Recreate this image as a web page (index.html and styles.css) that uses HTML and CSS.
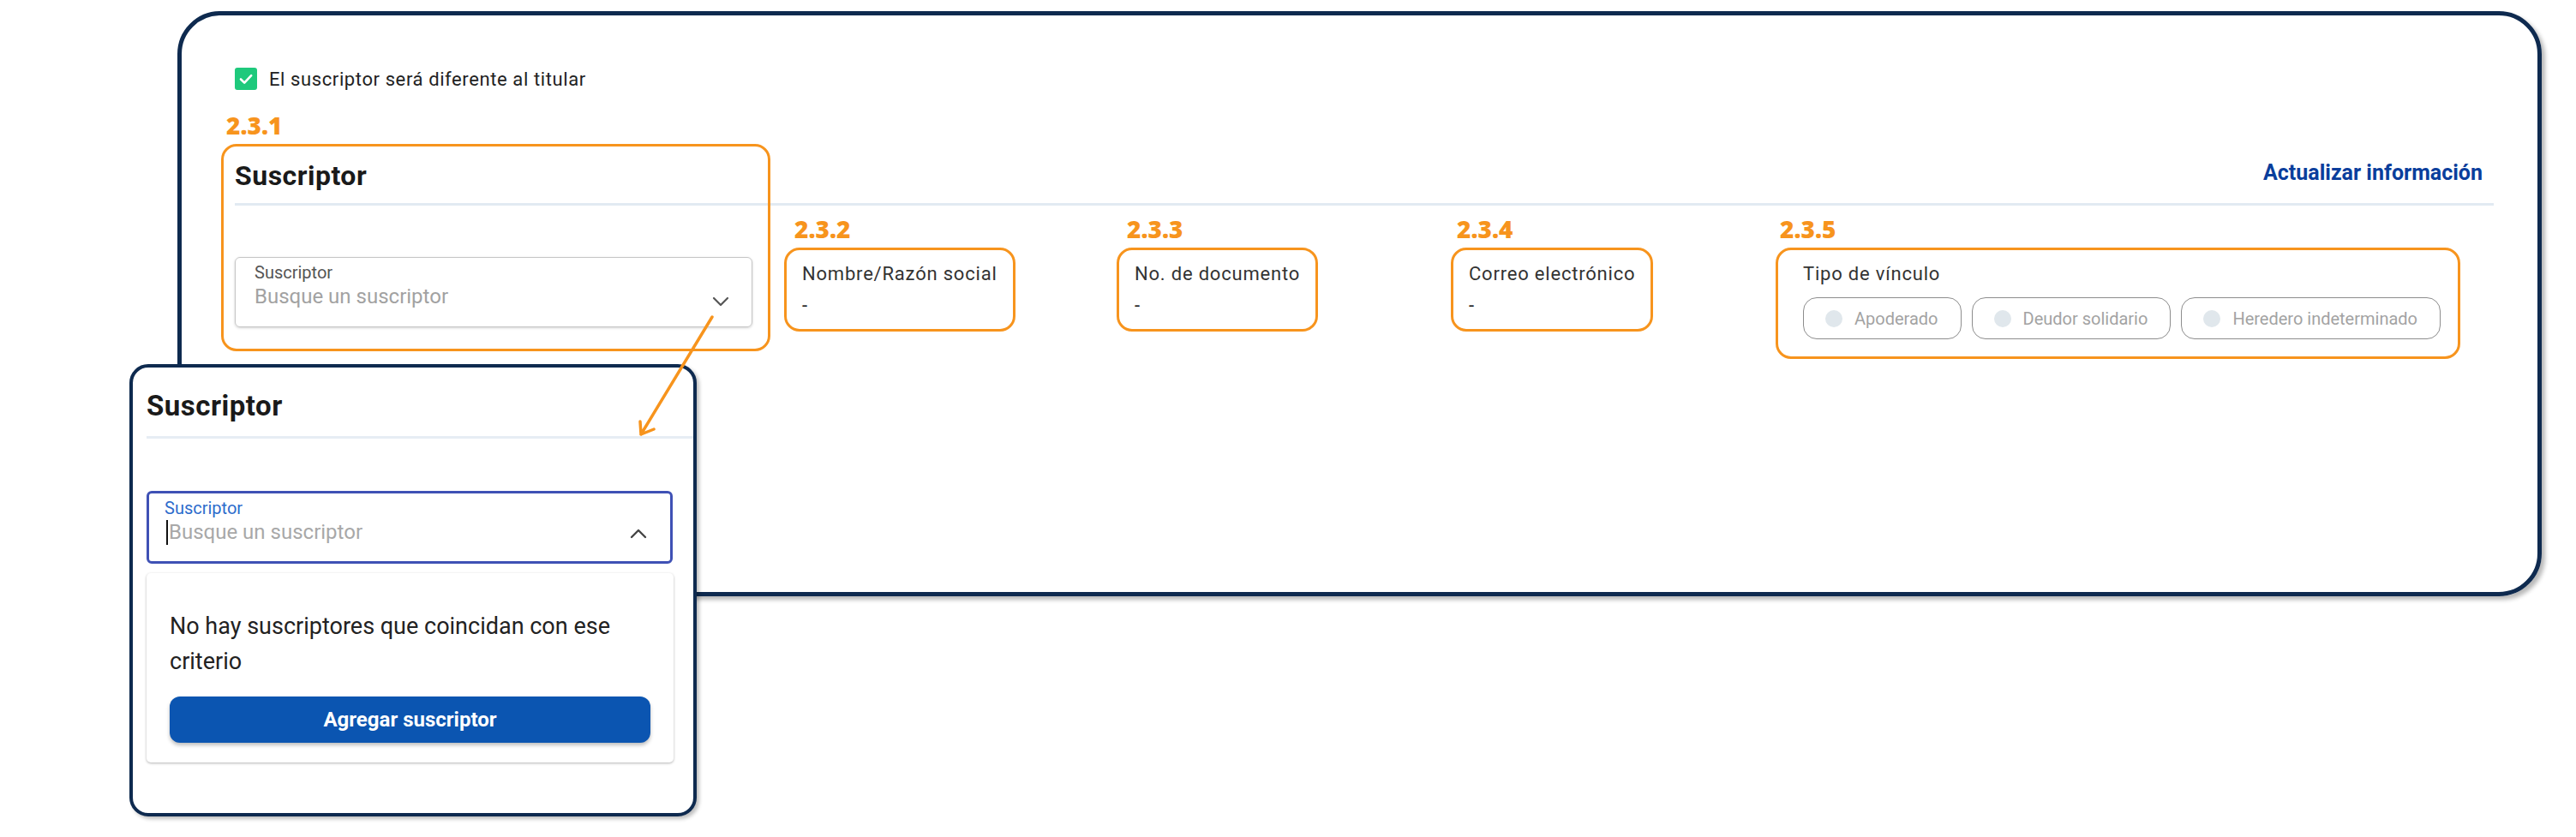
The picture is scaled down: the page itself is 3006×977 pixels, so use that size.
FILE: index.html
```html
<!DOCTYPE html>
<html lang="es">
  <head>
    <meta charset="UTF-8" />
    <meta name="viewport" content="width=device-width, initial-scale=1.0" />
    <title>Suscriptor</title>
    <link rel="stylesheet" href="styles.css">
  </head>
  <body>
    <div class="board">
      <section class="frame">
        <label class="check-row">
          <span class="checkbox">
            <svg viewBox="0 0 26 26" width="26" height="26">
              <path d="M7 13.5 L11.2 17.6 L19.2 9.2" fill="none" stroke="#fff" stroke-width="2.6" stroke-linecap="round" stroke-linejoin="round" />
            </svg>
          </span>
          El suscriptor será diferente al titular
        </label>

        <div class="section-head">
          <h2>Suscriptor</h2>
          <a class="update-link" href="#">Actualizar información</a>
        </div>

        <div class="fields">
          <div class="field-col select-col">
            <div class="select">
              <div class="select-text">
                <span class="select-label">Suscriptor</span>
                <span class="select-placeholder">Busque un suscriptor</span>
              </div>
              <svg class="chevron" viewBox="0 0 20 12" width="20" height="12">
                <path d="M2 2 L10 10 L18 2" fill="none" stroke="#555" stroke-width="2.2" stroke-linecap="round" stroke-linejoin="round" />
              </svg>
            </div>
          </div>

          <div class="field-col">
            <span class="tag tag-far">2.3.2</span>
            <div class="note-box info-box">
              <div class="info-label">Nombre/Razón social</div>
              <div class="info-value">-</div>
            </div>
          </div>

          <div class="field-col">
            <span class="tag tag-far">2.3.3</span>
            <div class="note-box info-box">
              <div class="info-label">No. de documento</div>
              <div class="info-value">-</div>
            </div>
          </div>

          <div class="field-col">
            <span class="tag">2.3.4</span>
            <div class="note-box info-box">
              <div class="info-label">Correo electrónico</div>
              <div class="info-value">-</div>
            </div>
          </div>

          <div class="field-col">
            <span class="tag tag-near">2.3.5</span>
            <div class="note-box link-box">
              <div class="info-label">Tipo de vínculo</div>
              <div class="chips">
                <span class="chip"><span class="dot"></span>Apoderado</span>
                <span class="chip"><span class="dot"></span>Deudor solidario</span>
                <span class="chip"><span class="dot"></span>Heredero indeterminado</span>
              </div>
            </div>
          </div>
        </div>

        <!-- marker around the title and the search field -->
        <span class="tag tag-float">2.3.1</span>
        <div class="note-frame"></div>
      </section>

      <!-- open state of the search field -->
      <div class="popup">
        <div class="popup-head">
          <h3>Suscriptor</h3>
        </div>
        <div class="select select-open">
          <div class="select-text">
            <span class="select-label">Suscriptor</span>
            <span class="select-input"><span class="caret"></span>Busque un suscriptor</span>
          </div>
          <svg class="chevron" viewBox="0 0 20 12" width="20" height="12">
            <path d="M2 10 L10 2 L18 10" fill="none" stroke="#444" stroke-width="2.4" stroke-linecap="round" stroke-linejoin="round" />
          </svg>
        </div>
        <div class="options">
          <p>No hay suscriptores que coincidan con ese criterio</p>
          <button type="button" class="btn-add">Agregar suscriptor</button>
        </div>
      </div>

      <svg class="pointer" viewBox="0 0 100 160" width="100" height="160">
        <path d="M91 10 L8 147 M7 132 L8 147 L23 141" fill="none" stroke="#f7941d" stroke-width="3.5" stroke-linecap="round" stroke-linejoin="round" />
      </svg>
    </div>
  </body>
</html>
```

FILE: styles.css
```css
/* Base */
* {
  box-sizing: border-box;
  margin: 0;
  padding: 0;
}

body {
  background: #fff;
  font-family: Roboto, "Liberation Sans", Arial, sans-serif;
  color: #222;
}

.board {
  position: relative;
  width: 3006px;
  height: 977px;
  overflow: hidden;
}

/* Main card */
.frame {
  position: relative;
  margin: 13px 0 0 207px;
  width: 2759px;
  height: 683px;
  padding: 61px 51px 0 62px;
  border: 5px solid #0e2a4f;
  border-radius: 50px;
  box-shadow: 4px 4px 5px rgba(0, 0, 0, 0.28);
}

.check-row {
  display: flex;
  align-items: center;
  gap: 14px;
  height: 26px;
  font-size: 22px;
  letter-spacing: 0.6px;
  color: #222;
}

.checkbox {
  width: 26px;
  height: 26px;
  border-radius: 3px;
  background: #1ec97c;
  display: flex;
}

.section-head {
  display: flex;
  justify-content: space-between;
  margin-top: 82px;
  padding-bottom: 14px;
  border-bottom: 3px solid #e2eaf2;
}

.section-head h2 {
  font-size: 32px;
  line-height: 36px;
  font-weight: 700;
  letter-spacing: 0.5px;
  color: #1a1a1a;
}

.update-link {
  align-self: flex-end;
  margin: 0 13px 7px 0;
  font-size: 25px;
  line-height: 28px;
  font-weight: 700;
  color: #0a3e9c;
  text-decoration: none;
}

/* Field row */
.fields {
  display: grid;
  grid-template-columns: 641px 388px 390px 379px auto;
  margin-top: 12px;
}

.select-col {
  padding-top: 48px;
}

.tag {
  display: block;
  margin: 0 0 7px 7px;
  font-family: "Open Sans", sans-serif;
  font-size: 28px;
  line-height: 30px;
  font-weight: 800;
  color: #f7941d;
}

.tag-far {
  margin-left: 12px;
}

.tag-near {
  margin-left: 5px;
}

.tag-float {
  position: absolute;
  left: 52px;
  top: 113px;
  margin: 0;
}

.note-frame {
  position: absolute;
  left: 46px;
  top: 150px;
  width: 641px;
  height: 242px;
  border: 3px solid #f7941d;
  border-radius: 18px;
}

.note-box {
  border: 3px solid #f7941d;
  border-radius: 18px;
  width: fit-content;
}

.info-box {
  min-width: 235px;
  padding: 15px 18px 14px;
}

.info-label {
  font-size: 22px;
  line-height: 26px;
  letter-spacing: 0.8px;
  color: #333;
}

.info-value {
  margin-top: 11px;
  font-size: 22px;
  line-height: 26px;
  color: #222;
}

.link-box {
  padding: 15px 20px 20px 29px;
}

.chips {
  display: flex;
  gap: 12px;
  margin-top: 14px;
}

.chip {
  display: flex;
  align-items: center;
  gap: 14px;
  height: 49px;
  padding: 0 26px 0 25px;
  border: 1.5px solid #8d8d8d;
  border-radius: 16px;
  font-size: 20px;
  color: #a3a3a3;
}

.dot {
  width: 20px;
  height: 20px;
  border-radius: 50%;
  background: #e0e7ec;
}

/* Search field */
.select {
  display: flex;
  justify-content: space-between;
  width: 604px;
  height: 82px;
  padding: 6px 26px 0 22px;
  border: 1.5px solid #c6c6c6;
  border-radius: 6px;
  box-shadow: 0 1px 3px rgba(0, 0, 0, 0.18);
}

.select-text {
  display: flex;
  flex-direction: column;
  gap: 3px;
}

.select-label {
  font-size: 20px;
  line-height: 23px;
  color: #555;
}

.select-placeholder {
  font-size: 24px;
  line-height: 27px;
  color: #a2a2a2;
}

.chevron {
  align-self: flex-end;
  margin-bottom: 23px;
}

/* Open dropdown */
.popup {
  position: absolute;
  left: 151px;
  top: 425px;
  width: 662px;
  height: 528px;
  padding: 27px 24px 0 16px;
  background: #fff;
  border: 4px solid #0e2a4f;
  border-radius: 22px;
  box-shadow: 3px 3px 4px rgba(0, 0, 0, 0.25);
}

.popup-head {
  margin-right: -24px;
  padding-bottom: 17px;
  border-bottom: 3px solid #e6edf4;
}

.popup-head h3 {
  font-size: 33px;
  line-height: 36px;
  font-weight: 700;
  letter-spacing: 0.5px;
  color: #1a1a1a;
}

.select-open {
  width: 614px;
  height: 85px;
  margin-top: 61px;
  padding: 6px 27px 0 18px;
  border: 3px solid #3f51b5;
  box-shadow: none;
}

.select-open .select-label {
  color: #2d6ccc;
}

.select-open .select-text {
  gap: 2px;
}

.select-open .chevron {
  margin-bottom: 26px;
}

.select-input {
  display: flex;
  align-items: center;
  font-size: 24px;
  line-height: 27px;
  color: #a8a8a8;
}

.caret {
  width: 2px;
  height: 29px;
  margin: 0 1px 0 2px;
  background: #111;
}

.options {
  width: 615px;
  height: 221px;
  margin-top: 11px;
  padding: 42px 27px 0;
  border-radius: 5px;
  box-shadow: 0 1px 3px rgba(0, 0, 0, 0.3);
}

.options p {
  font-size: 27px;
  line-height: 41px;
  color: #222;
}

.btn-add {
  display: block;
  width: 100%;
  height: 54px;
  margin-top: 20px;
  border: none;
  border-radius: 12px;
  background: #0b55b1;
  color: #fff;
  font-family: Roboto, sans-serif;
  font-size: 24px;
  font-weight: 700;
  box-shadow: 0 3px 4px rgba(0, 0, 0, 0.25);
}

/* Callout arrow */
.pointer {
  position: absolute;
  left: 740px;
  top: 360px;
  z-index: 2;
}
```
